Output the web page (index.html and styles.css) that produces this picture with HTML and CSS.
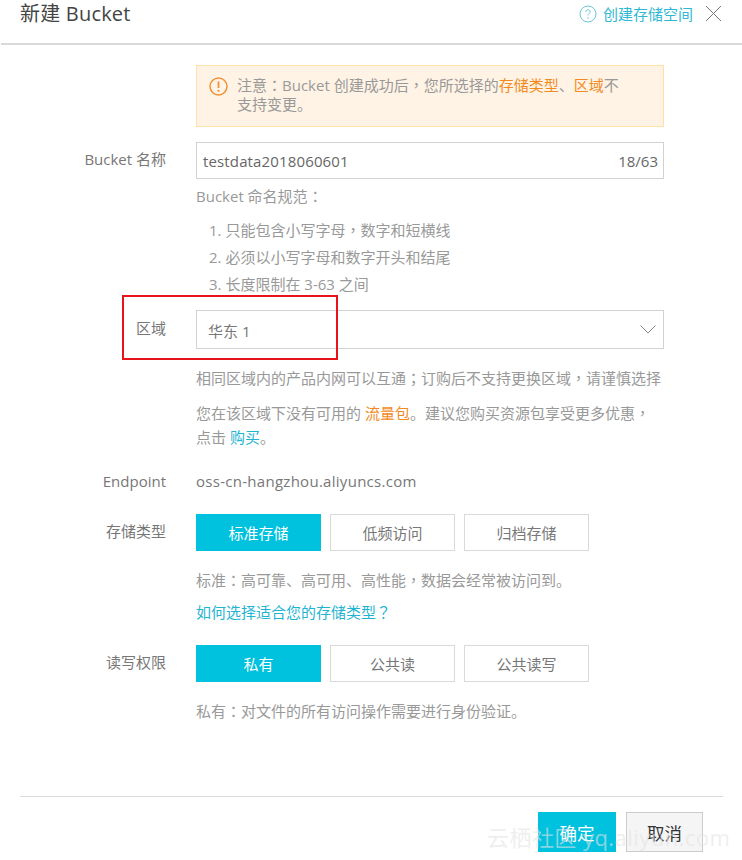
FILE: index.html
```html
<!DOCTYPE html>
<html lang="zh-Hans">
<head>
<meta charset="utf-8">
<title>新建 Bucket</title>
<link rel="stylesheet" href="styles.css">
</head>
<body>
<div class="dialog">
  <header class="head">
    <h1 class="title">新建 Bucket</h1>
    <a class="help">
      <svg class="help-icon" width="18" height="18" viewBox="0 0 18 18"><circle cx="9" cy="9" r="8" fill="none" stroke="#6cc6d8" stroke-width="1"/><path d="M6.8 7c0-1.400 1-2.200 2.200-2.200s2.200.8 2.200 2c0 1.700-2.200 1.800-2.200 3.600" fill="none" stroke="#6cc6d8" stroke-width="1"/><circle cx="9" cy="13" r=".8" fill="#6cc6d8"/></svg>
      创建存储空间
    </a>
    <svg class="close" width="17" height="17" viewBox="0 0 17 17"><path d="M1 1l15 15M16 1L1 16" stroke="#777" stroke-width="1" fill="none"/></svg>
  </header>
  <main class="form">
    <div class="alert">
      <svg class="alert-icon" width="19" height="19" viewBox="0 0 19 19"><circle cx="9.500" cy="9.500" r="8.500" fill="none" stroke="#f0913a" stroke-width="1.500"/><path d="M9.500 4.500v6.500" stroke="#f0913a" stroke-width="1.800"/><circle cx="9.500" cy="13.800" r="1.100" fill="#f0913a"/></svg>
      <p class="alert-text">注意<span class="p" lang="zh-Hant">：</span>Bucket 创建成功后<span class="p" lang="zh-Hant">，</span>您所选择的<span class="warn">存储类型</span>、<span class="warn">区域</span>不<br>支持变更。</p>
    </div>
    <div class="row row-name">
      <label class="label">Bucket 名称</label>
      <div class="field">
        <div class="input"><span class="value">testdata2018060601</span><span>18/63</span></div>
        <p class="hint hint-rule">Bucket 命名规范<span class="p" lang="zh-Hant">：</span></p>
        <ol class="rules">
          <li>1. 只能包含小写字母<span class="p" lang="zh-Hant">，</span>数字和短横线</li>
          <li>2. 必须以小写字母和数字开头和结尾</li>
          <li>3. 长度限制在 3-63 之间</li>
        </ol>
      </div>
    </div>
    <div class="row row-region">
      <label class="label">区域</label>
      <div class="field">
        <div class="select"><span class="select-value">华东 1</span>
          <svg width="16" height="9" viewBox="0 0 16 9"><path d="M.5.5l7.500 7.500 7.500-7.500" fill="none" stroke="#888" stroke-width="1"/></svg>
        </div>
        <p class="hint hint-region">相同区域内的产品内网可以互通<span class="p" lang="zh-Hant">；</span>订购后不支持更换区域<span class="p" lang="zh-Hant">，</span>请谨慎选择</p>
        <p class="hint hint-pack">您在该区域下没有可用的 <span class="warn">流量包</span>。建议您购买资源包享受更多优惠<span class="p" lang="zh-Hant">，</span><br>点击 <a class="link">购买</a>。</p>
      </div>
    </div>
    <div class="row row-end">
      <label class="label">Endpoint</label>
      <div class="field endpoint">oss-cn-hangzhou.aliyuncs.com</div>
    </div>
    <div class="row row-opt">
      <label class="label">存储类型</label>
      <div class="field">
        <div class="options"><button class="opt on">标准存储</button><button class="opt">低频访问</button><button class="opt">归档存储</button></div>
        <p class="hint hint-opt">标准<span class="p" lang="zh-Hant">：</span>高可靠、高可用、高性能<span class="p" lang="zh-Hant">，</span>数据会经常被访问到。</p>
        <p class="hint hint-how"><a class="link">如何选择适合您的存储类型<span class="p" lang="zh-Hant">？</span></a></p>
      </div>
    </div>
    <div class="row row-opt">
      <label class="label">读写权限</label>
      <div class="field">
        <div class="options"><button class="opt on">私有</button><button class="opt">公共读</button><button class="opt">公共读写</button></div>
        <p class="hint hint-opt">私有<span class="p" lang="zh-Hant">：</span>对文件的所有访问操作需要进行身份验证。</p>
      </div>
    </div>
  </main>
  <footer class="foot">
    <button class="btn primary">确定</button>
    <button class="btn cancel">取消</button>
  </footer>
</div>
<div class="redbox"></div>
<div class="watermark">云栖社区 yq.aliyun.com</div>
</body>
</html>
```
FILE: styles.css
```css
* { box-sizing: border-box; }
html, body { margin: 0; padding: 0; background: #fff; }
body {
  position: relative;
  width: 742px;
  height: 860px;
  overflow: hidden;
  font-family: "Open Sans", "Noto Sans CJK SC", sans-serif;
  font-size: 15px;
  color: #666;
  text-spacing-trim: space-all;
}
.p { font-family: "Noto Sans CJK TC", sans-serif; line-height: 0; }
.head {
  display: flex;
  align-items: center;
  height: 45px;
  padding: 0 21px 16px 20px;
  border-bottom: 2px solid #d9d9d9;
  margin-left: 1px;
}
.title {
  margin: 0 auto 0 -1px;
  font-size: 20px;
  font-weight: 400;
  line-height: 28px;
  letter-spacing: 0.2px;
  color: #444;
}
.help {
  display: flex;
  align-items: center;
  gap: 6px;
  font-size: 15px;
  color: #2fb8d4;
}
.close { margin-left: 12px; margin-right: -1px; }
.form { padding-top: 20px; }
.alert {
  display: flex;
  align-items: flex-start;
  margin-left: 196px;
  width: 468px;
  height: 62px;
  padding: 10px 12px;
  background: #fff3e5;
  border: 1px solid #fce2a8;
}
.alert-icon { flex: none; margin-right: 9px; margin-top: 1px; }
.alert-text { margin: 0; line-height: 19px; color: #999; }
.warn { color: #f28b1f; }
.link { color: #1fb4d2; }
.row { display: grid; grid-template-columns: 166px 468px; column-gap: 30px; }
.label { text-align: right; color: #777; line-height: 20px; }
.row-name { margin-top: 15px; }
.row-name .label { padding-top: 7px; }
.input {
  display: flex;
  justify-content: space-between;
  align-items: center;
  height: 37px;
  padding: 0 5px 0 6px;
  border: 1px solid #d2d2d2;
  color: #666;
}
.value { letter-spacing: 0.14px; }
.hint { margin: 0; color: #999; line-height: 20px; }
.hint-rule { margin-top: 7px; }
.rules { list-style: none; margin: 11px 0 0; padding: 0 0 0 13px; color: #999; line-height: 27px; }
.row-region { margin-top: 12px; }
.row-region .label { padding-top: 8px; }
.select {
  display: flex;
  justify-content: space-between;
  align-items: center;
  height: 39px;
  padding: 0 7px 0 11px;
  border: 1px solid #d2d2d2;
  color: #777;
}
.select-value { padding-top: 1px; }
.hint-region { margin-top: 19px; }
.hint-pack { margin-top: 13px; line-height: 24px; }
.row-end { margin-top: 22px; }
.endpoint { line-height: 20px; color: #777; letter-spacing: 0.28px; }
.row-opt { margin-top: 23px; }
.row-opt .label { padding-top: 7px; }
.options { display: flex; gap: 9px; }
.opt {
  width: 125px;
  height: 37px;
  padding: 0;
  font: inherit;
  background: #fff;
  border: 1px solid #d9d9d9;
  color: #777;
}
.opt.on { background: #00c1de; border-color: #00c1de; color: #fff; }
.hint-opt { margin-top: 19px; }
.hint-how { margin-top: 12px; }
.foot {
  display: flex;
  justify-content: flex-end;
  gap: 10px;
  margin: 75px 19px 0 20px;
  padding: 15px 20px 0 0;
  border-top: 1px solid #dcdcdc;
}
.btn { height: 40px; padding: 0; font: inherit; font-size: 17.500px; }
.primary { width: 78px; background: #00c1de; border: 0; color: #fff; }
.cancel { width: 77px; background: #f5f5f5; border: 1px solid #ccc; color: #333; }
.redbox {
  position: absolute;
  left: 122px;
  top: 295px;
  width: 216px;
  height: 65px;
  border: 2px solid #e8141c;
}
.watermark {
  position: absolute;
  left: 487px;
  top: 822px;
  font-size: 22px;
  line-height: 30px;
  white-space: nowrap;
  color: rgba(228, 228, 228, 0.6);
  letter-spacing: 0.45px;
}
```
